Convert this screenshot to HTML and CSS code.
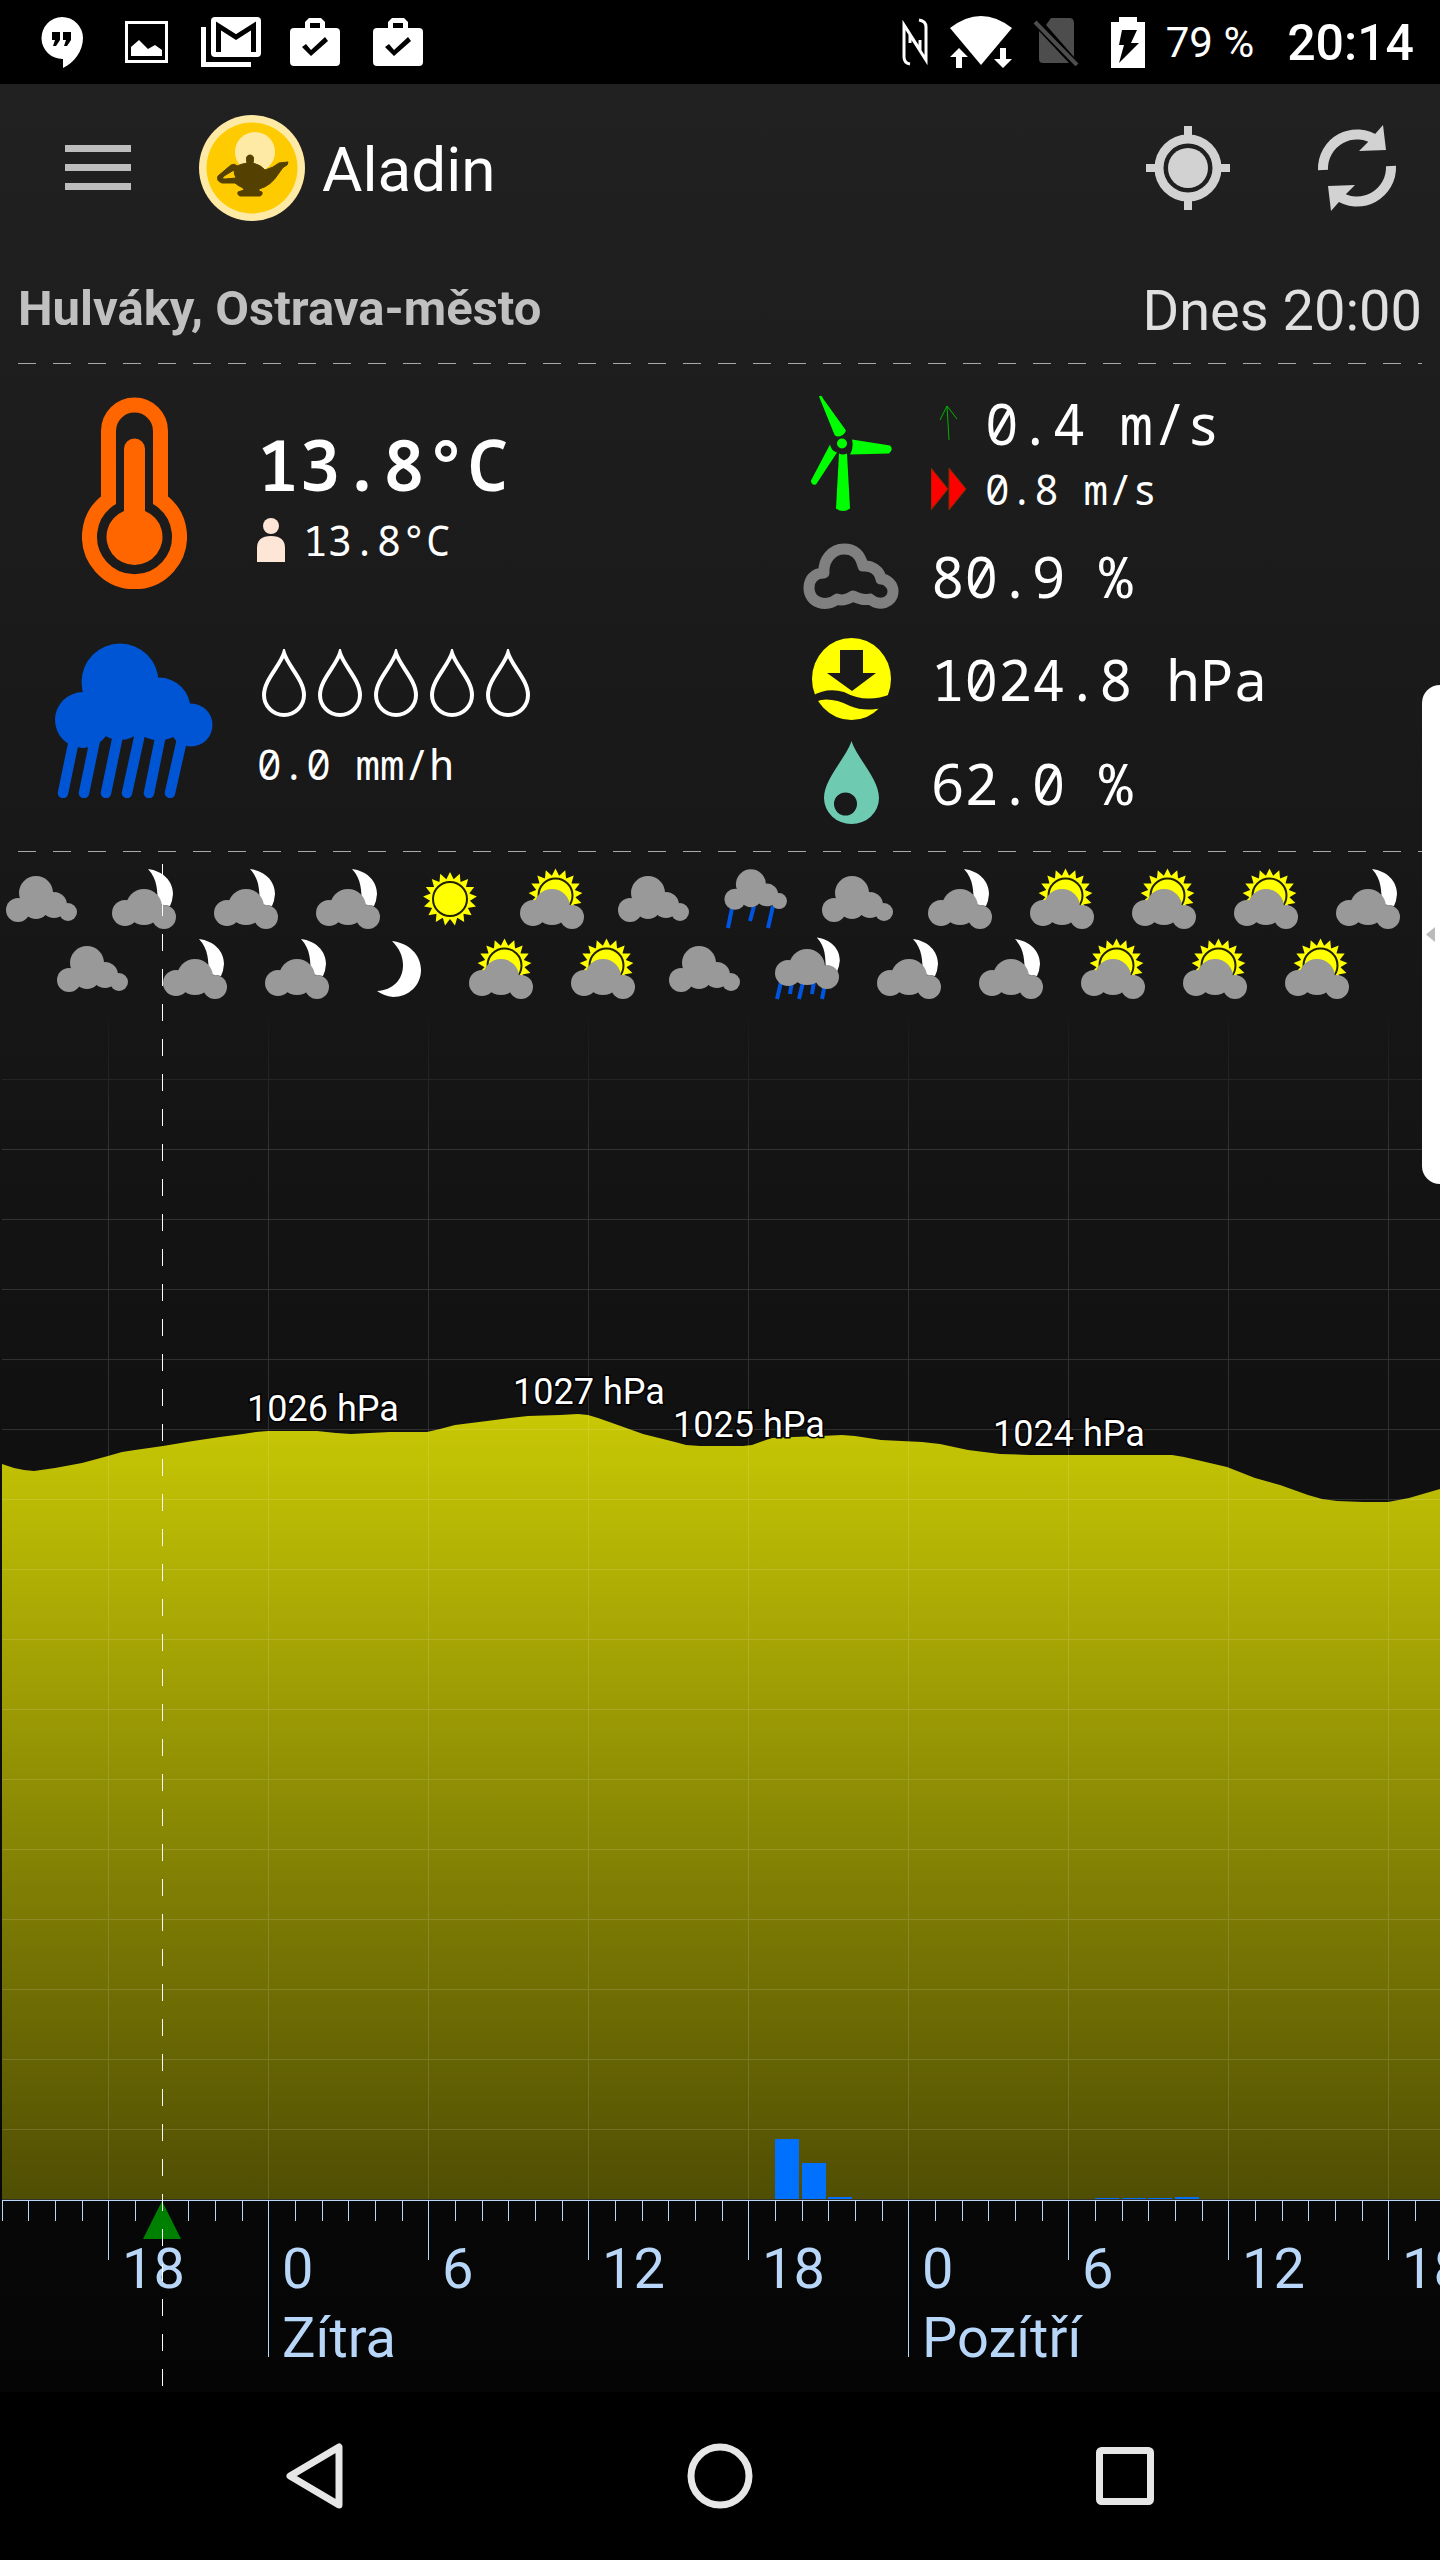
FILE: index.html
```html
<!DOCTYPE html>
<html lang="cs">
<head>
<meta charset="utf-8">
<meta name="viewport" content="width=device-width, initial-scale=1">
<title>Aladin</title>
<link rel="stylesheet" href="styles.css">
</head>
<body>
<svg class="sprite" aria-hidden="true">
  <defs>
    <symbol id="bag" viewBox="0 0 50 48"><path fill="#fff" fill-rule="evenodd" d="M15 10V4l4-4h12l4 4v6h11q4 0 4 4v30q0 4-4 4H4q-4 0-4-4V14q0-4 4-4zM20 10h10V5H20zM12 29l9 9 17-15-3-4-14 13-5-6z"/></symbol>
    <symbol id="drop" viewBox="0 0 44 68"><path fill="none" stroke="#fff" stroke-width="4" d="M22 4C18 17 2 31 2 46a20 20 0 0 0 40 0C42 31 26 17 22 4z"/></symbol>
    <g id="shape-cloud" fill="#999">
      <circle cx="30" cy="29" r="17"/><circle cx="12" cy="46" r="12"/><circle cx="48" cy="41" r="13"/><circle cx="62" cy="48" r="9"/><circle cx="30" cy="42" r="13"/>
    </g>
    <g id="shape-wide" fill="#999">
      <circle cx="17" cy="49" r="13"/><circle cx="36" cy="43" r="18"/><circle cx="56" cy="53" r="12"/>
    </g>
    <path id="shape-crescent" fill="#fff" d="M40 5C55 7 65 17 65 30Q64.500 37 62 42L50 40C49 26 50 16 40 5z"/>
    <path id="ray" d="M31.500 17L36 8l4.500 9z"/>
    <g id="shape-sun" fill="#ff0">
      <use href="#ray"/><use href="#ray" transform="rotate(21.180 36 35)"/><use href="#ray" transform="rotate(42.350 36 35)"/><use href="#ray" transform="rotate(63.530 36 35)"/><use href="#ray" transform="rotate(84.710 36 35)"/><use href="#ray" transform="rotate(105.880 36 35)"/><use href="#ray" transform="rotate(127.060 36 35)"/><use href="#ray" transform="rotate(148.240 36 35)"/><use href="#ray" transform="rotate(169.410 36 35)"/><use href="#ray" transform="rotate(190.590 36 35)"/><use href="#ray" transform="rotate(211.760 36 35)"/><use href="#ray" transform="rotate(232.940 36 35)"/><use href="#ray" transform="rotate(254.120 36 35)"/><use href="#ray" transform="rotate(275.290 36 35)"/><use href="#ray" transform="rotate(296.470 36 35)"/><use href="#ray" transform="rotate(317.650 36 35)"/><use href="#ray" transform="rotate(338.820 36 35)"/>
      <circle cx="36" cy="35" r="20"/><circle cx="36" cy="35" r="17" fill="none" stroke="#222200" stroke-width="2"/>
    </g>
    <symbol id="w-cloud" viewBox="0 0 72 70"><use href="#shape-cloud"/></symbol>
    <symbol id="w-cloud-moon" viewBox="0 0 72 70"><use href="#shape-crescent"/><use href="#shape-wide"/></symbol>
    <symbol id="w-sun" viewBox="0 0 72 70"><use href="#shape-sun"/></symbol>
    <symbol id="w-cloud-sun" viewBox="0 0 72 70"><use href="#shape-sun" transform="translate(3.500 -3.500)"/><use href="#shape-wide"/></symbol>
    <symbol id="w-moon" viewBox="0 0 72 70"><path fill="#fff" d="M29 7C46 9 58 21 58 36 58 51 46 63 30 63Q21 62 14 57C30 56 40 46 40 31 40 22 36 14 29 7z"/></symbol>
    <symbol id="w-rain" viewBox="0 0 72 70"><path stroke="#0055e0" stroke-width="4" d="M12 44L8 64M34 42l-4 15M53 42l-5 22"/><use href="#shape-cloud" transform="translate(4.500 -5.200) scale(.88)"/></symbol>
    <symbol id="w-rain-moon" viewBox="0 0 72 70"><use href="#shape-crescent" transform="translate(9 -1) scale(.92)"/><path stroke="#0055e0" stroke-width="4" d="M10 48L6 65M21 47l-2 13M32 48l-4 17M43 47l-2 13M54 50l-3 15"/><use href="#shape-wide" transform="translate(0 -10)"/></symbol>
  </defs>
</svg>

<header class="status">
  <div class="status-side">
    <svg class="st-chat" viewBox="0 0 43 51"><path fill="#fff" d="M22 0a21 21 0 0 1 21 21c0 13-9 25-20 30v-9A21 21 0 1 1 22 0z"/><path d="M12 15h8v8l-4 6h-3l2-6h-3zM23 15h8v8l-4 6h-3l2-6h-3z"/></svg>
    <svg class="st-image" viewBox="0 0 43 42"><path fill="none" stroke="#fff" stroke-width="3" d="M1.500 1.500h40v39h-40z"/><path fill="#fff" d="M6 26l8-7 9 9 7-4 7 5v6H6z"/></svg>
    <svg class="st-mail" viewBox="0 0 60 50"><path fill="none" stroke="#fff" stroke-width="5" d="M2.500 10v37.500H50"/><rect x="10" width="50" height="40" rx="4" fill="#fff"/><path fill="none" stroke="#000" stroke-width="5" d="M17.500 35V9L35 20 52.500 9v26"/></svg>
    <svg class="st-bag"><use href="#bag"/></svg>
    <svg class="st-bag"><use href="#bag"/></svg>
  </div>
  <div class="status-side status-right">
    <svg class="st-nfc" viewBox="0 0 28 48"><path fill="none" stroke="#fff" stroke-width="3" d="M9 46Q3 45 3 39V7l16 25V22M18 2q7 1 7 7v33L9 17v8"/></svg>
    <svg class="st-wifi" viewBox="0 0 62 52"><path fill="#fff" d="M0 12Q31-12 62 12L31 49z"/><path stroke="#000" stroke-width="4" fill="#fff" paint-order="stroke" d="M9 32l9 9h-6v11H6V41H0zM53 52l-9-9h6V32h6v11h6z"/></svg>
    <svg class="st-sim" viewBox="0 0 46 48"><path fill="#4d4d4d" d="M18 0h18q5 0 5 5v34L13 7zM6 13l30 32H10q-4 0-4-4z"/><path stroke="#4d4d4d" stroke-width="4" d="M2 4l42 43"/></svg>
    <svg class="st-battery" viewBox="0 0 34 51"><path fill="#fff" d="M8 0h18v5h8v46H0V5h8z"/><path d="M11 13h15l-6 13h8L8 46l5-18H8z"/></svg>
    <span class="percent">79 %</span>
    <time class="clock">20:14</time>
  </div>
</header>

<main class="app">
  <div class="appbar">
    <button class="plain" aria-label="Menu"><svg class="ic-menu" viewBox="0 0 66 46"><path fill="#bdbdbd" d="M0 0h66v7H0zM0 19h66v7H0zM0 38h66v7H0z"/></svg></button>
    <svg class="ic-logo" viewBox="0 0 106 106"><circle cx="53" cy="53" r="53" fill="#feeaa5"/><circle cx="53" cy="53" r="45.500" fill="#fecb00"/><circle cx="56" cy="37" r="20" fill="#feeaa5"/><path fill="#544000" fill-rule="evenodd" stroke="#544000" stroke-linejoin="round" d="M48 48Q46 40 51 40 56 40 54 48 62 50 66 55 74 53 80 48L89 47 88 50Q84 51 80 58 72 71 60 74V76L63 77Q64 80 61 81H41Q38 80 39 77L45 75 44 73Q38 70 36 68H23Q17 66 19 61L32 50Q36 48 38 51 42 49 48 48zM35 55L25 61Q22 64 26 64L37 63Q35 59 35 55z"/></svg>
    <h1>Aladin</h1>
    <button class="plain" aria-label="Poloha"><svg class="ic-target" viewBox="0 0 84 84"><g fill="none" stroke="#d2d2d2"><circle cx="42" cy="42" r="29" stroke-width="9"/><path stroke-width="8" d="M42 0v10M42 74v10M0 42h10M74 42h10"/></g><circle cx="42" cy="42" r="20" fill="#d2d2d2"/></svg></button>
    <button class="plain" aria-label="Obnovit"><svg class="ic-refresh" viewBox="0 0 80 86"><g id="half"><path fill="none" stroke="#d2d2d2" stroke-width="10" d="M6 45A34 34 0 0 1 60 16"/><path fill="#d2d2d2" d="M66 0l3 25-27 1 10-10z"/></g><use href="#half" transform="rotate(180 40 43)"/></svg></button>
  </div>

  <div class="place">
    <h2>Hulváky, Ostrava-město</h2>
    <time>Dnes 20:00</time>
  </div>
  <div class="dashes"></div>

  <section class="conditions">
    <div class="col-left">
      <div class="metric">
        <div class="big-icon"><svg class="ic-thermo" viewBox="0 0 105 192"><path fill="none" stroke="#f60" stroke-width="15" d="M26.500 103V34a26 26 0 0 1 52 0V103a45 45 0 1 1-52 0z"/><path fill="#f60" d="M42 114V52a10.500 10.500 0 0 1 21 0v62a28 28 0 1 1-21 0z"/></svg></div>
        <div class="values temp-values">
          <strong class="huge">13.8°C</strong>
          <span class="small feels"><svg class="ic-person" viewBox="0 0 28 44"><circle cx="14" cy="8" r="8" fill="#fee6d6"/><path fill="#fee6d6" d="M0 44V30q0-12 14-12t14 12v14z"/></svg>13.8°C</span>
        </div>
      </div>
      <div class="metric">
        <div class="big-icon"><svg class="ic-rain" viewBox="0 0 158 155"><g fill="#0055d4"><circle cx="65" cy="39" r="38.500"/><circle cx="104" cy="66" r="31.500"/><circle cx="28" cy="77" r="28"/><circle cx="136" cy="82" r="21.500"/><circle cx="65" cy="68" r="29"/></g><path stroke="#0055d4" stroke-width="10.500" stroke-linecap="round" d="M20 92L8 150M41 92L29 150M63 92L51 150M86 86L72 150M107 86L94 150M128 92L115 150"/></svg></div>
        <div class="values rain-values">
          <div class="drops"><svg><use href="#drop"/></svg><svg><use href="#drop"/></svg><svg><use href="#drop"/></svg><svg><use href="#drop"/></svg><svg><use href="#drop"/></svg></div>
          <span class="small">0.0 mm/h</span>
        </div>
      </div>
    </div>

    <div class="col-right">
      <div class="line wind">
        <div class="icon"><svg class="ic-wind" viewBox="0 0 82 116"><g fill="#0f0"><path d="M9 1q3-2 4 2l23 32q-2 6-9 6-3-1-3-3zM42 44l38 6q4 4-1 8l-39 1q4-7 2-15zM20 49q1 6 7 8L6 89q-5 1-5-4zM29 58q4 2 8 0l3 55q-7 5-14 0z"/><circle cx="32" cy="48" r="5"/></g></svg></div>
        <div class="wind-values">
          <span class="medium"><svg class="ic-slot" viewBox="0 0 36 44"><path fill="none" stroke="#00b400" d="M18 39L16 5M9 19l7-14 10 13"/></svg>0.4 m/s</span>
          <span class="small"><svg class="ic-slot" viewBox="0 0 36 44"><path fill="#f00" stroke="#7a3000" d="M0 1l17 21L0 43zM18 1l17 21-17 21z"/></svg>0.8 m/s</span>
        </div>
      </div>
      <div class="line">
        <div class="icon"><svg class="ic-cover" viewBox="0 0 96 66"><path fill="none" stroke="#808080" stroke-width="11" stroke-linejoin="round" d="M21 30C10 30 6 38 6 45 6 60 24 65 34 56Q40 59 50 53 60 58 67 56C76 64 90 60 90 48 90 42 84 36 78 36 77 28 69 22 60 23 57 10 50 6 41 6 29 6 20 17 21 30z"/></svg></div>
        <span class="medium">80.9 %</span>
      </div>
      <div class="line">
        <div class="icon"><svg class="ic-pressure" viewBox="0 0 79 82"><ellipse cx="39.500" cy="41" rx="39.500" ry="41" fill="#ff0"/><path fill="#1a1a1a" d="M28 12h23v23h13L40 53 15 35h13zM0 58Q15 49 32 54 54 66 79 56V70L64 71Q50 73 38 68 22 60 9 62L0 65z"/></svg></div>
        <span class="medium">1024.8 hPa</span>
      </div>
      <div class="line humid">
        <div class="icon"><svg class="ic-humid" viewBox="0 0 55 83"><path fill="#6ecbb2" fill-rule="evenodd" d="M27.500 0C33 17 55 38 55 57a27.500 26 0 0 1-55 0C0 38 22 17 27.500 0zM10 63a11.500 11.500 0 1 0 23 0 11.500 11.500 0 1 0-23 0z"/></svg></div>
        <span class="medium">62.0 %</span>
      </div>
    </div>
  </section>
  <div class="dashes"></div>

  <section class="forecast">
    <div class="icons">
      <svg><use href="#w-cloud"/></svg><svg><use href="#w-cloud-moon"/></svg><svg><use href="#w-cloud-moon"/></svg><svg><use href="#w-cloud-moon"/></svg><svg><use href="#w-sun"/></svg><svg><use href="#w-cloud-sun"/></svg><svg><use href="#w-cloud"/></svg><svg><use href="#w-rain"/></svg><svg><use href="#w-cloud"/></svg><svg><use href="#w-cloud-moon"/></svg><svg><use href="#w-cloud-sun"/></svg><svg><use href="#w-cloud-sun"/></svg><svg><use href="#w-cloud-sun"/></svg><svg><use href="#w-cloud-moon"/></svg>
    </div>
    <div class="icons shifted">
      <svg><use href="#w-cloud"/></svg><svg><use href="#w-cloud-moon"/></svg><svg><use href="#w-cloud-moon"/></svg><svg><use href="#w-moon"/></svg><svg><use href="#w-cloud-sun"/></svg><svg><use href="#w-cloud-sun"/></svg><svg><use href="#w-cloud"/></svg><svg><use href="#w-rain-moon"/></svg><svg><use href="#w-cloud-moon"/></svg><svg><use href="#w-cloud-moon"/></svg><svg><use href="#w-cloud-sun"/></svg><svg><use href="#w-cloud-sun"/></svg><svg><use href="#w-cloud-sun"/></svg>
    </div>

    <svg class="chart" viewBox="0 1004 1440 1388" role="img" aria-label="Tlak a srážky">
      <defs>
        <linearGradient id="pressure" gradientUnits="userSpaceOnUse" x1="0" y1="1414" x2="0" y2="2199"><stop offset="0" stop-color="#c8c805"/><stop offset="1" stop-color="#504e03"/></linearGradient>
        <linearGradient id="fade" gradientUnits="userSpaceOnUse" x1="0" y1="1004" x2="0" y2="1150"><stop offset="0" stop-color="#000"/><stop offset="1" stop-color="#fff"/></linearGradient>
        <mask id="fade-mask" maskUnits="userSpaceOnUse" x="0" y="1004" width="1440" height="1200"><rect y="1004" width="1440" height="1200" fill="url(#fade)"/></mask>
        <pattern id="vgrid" patternUnits="userSpaceOnUse" x="108" y="0" width="160" height="70"><rect width="1" height="70" fill="#fff"/></pattern>
        <pattern id="hgrid" patternUnits="userSpaceOnUse" x="0" y="1079" width="160" height="70"><rect width="160" height="1" fill="#fff"/></pattern>
        <pattern id="hours" patternUnits="userSpaceOnUse" x="108" y="2200" width="160" height="60"><path fill="#b8d6f8" d="M0 0h1v60H0zM27 0h1v21h-1zM54 0h1v21h-1zM80 0h1v21h-1zM107 0h1v21h-1zM134 0h1v21h-1z"/></pattern>
      </defs>
      <path fill="url(#pressure)" d="M2 2199V1464L14 1468 24 1470 34 1471 55 1468 82 1463 108 1456 122 1452 135 1450 163 1446 193 1441 220 1437 243 1434 256 1432 268 1431H317L336 1433 351 1434 370 1433 390 1432H427L440 1429 455 1425 487 1421 510 1418 528 1416 560 1415 578 1414 588 1415 598 1418 615 1424 643 1434 675 1442 686 1445 700 1446H743L752 1445 763 1441 772 1438 793 1437 821 1436 842 1435 855 1436 868 1438 881 1440 922 1442 940 1444 968 1450 1000 1454 1030 1455H1172L1184 1457 1197 1460 1227 1467 1255 1478 1280 1485 1308 1495 1322 1499 1337 1501 1363 1502 1388 1502 1409 1498 1440 1489V2199z"/>
      <g opacity=".13" mask="url(#fade-mask)"><rect x="2" y="1004" width="1438" height="1195" fill="url(#vgrid)"/><rect x="2" y="1064" width="1438" height="1100" fill="url(#hgrid)"/></g>
      <path fill="#0070ff" d="M775 2139h24v60h-24zM802 2163h24v36h-24zM828 2197h24v2h-24zM1095 2198h24v1h-24zM1122 2198h24v1h-24zM1148 2198h24v1h-24zM1175 2197h24v2h-24z"/>
      <rect x="2" y="2199" width="1438" height="1" fill="#33332c"/>
      <rect x="2" y="2200" width="1438" height="1" fill="#b8d6f8"/>
      <rect x="2" y="2200" width="1438" height="60" fill="url(#hours)"/>
      <path fill="#b8d6f8" d="M2 2200h1v21H2zM268 2200h1v157h-1zM908 2200h1v157h-1z"/>
      <path fill="#008000" d="M162 2201l19 38h-38z"/>
      <g class="peak"><text x="323" y="1421">1026 hPa</text><text x="589" y="1404">1027 hPa</text><text x="749" y="1437">1025 hPa</text><text x="1069" y="1446">1024 hPa</text></g>
      <g class="axis"><text x="122" y="2288">18</text><text x="282" y="2288">0</text><text x="442" y="2288">6</text><text x="602" y="2288">12</text><text x="762" y="2288">18</text><text x="922" y="2288">0</text><text x="1082" y="2288">6</text><text x="1242" y="2288">12</text><text x="1402" y="2288">18</text><text x="282" y="2357">Zítra</text><text x="922" y="2357">Pozítří</text></g>
    </svg>
    <div class="now-line"></div>
  </section>

  <button class="drawer-tab" aria-label="Otevřít panel"><svg viewBox="0 0 9 15"><path fill="#bbb" d="M9 0v15L0 7.500z"/></svg></button>
</main>

<nav class="navbar">
  <button class="plain" aria-label="Zpět"><svg viewBox="0 0 66 66"><path fill="none" stroke="#e6e6e6" stroke-width="7" stroke-linejoin="round" d="M57 4v58L8 33z"/></svg></button>
  <button class="plain" aria-label="Domů"><svg viewBox="0 0 66 66"><circle cx="33" cy="33" r="29" fill="none" stroke="#e6e6e6" stroke-width="7"/></svg></button>
  <button class="plain" aria-label="Přehled"><svg viewBox="0 0 66 66"><rect x="7.500" y="7.500" width="51" height="51" rx="2" fill="none" stroke="#e6e6e6" stroke-width="7"/></svg></button>
</nav>
</body>
</html>
```
FILE: styles.css
```css
* { box-sizing: border-box; }

body {
  margin: 0;
  min-height: 100vh;
  display: flex;
  flex-direction: column;
  background: #000;
  color: #fff;
  font-family: Roboto, sans-serif;
  overflow-x: hidden;
}

svg { display: block; flex: none; }
.sprite { position: absolute; width: 0; height: 0; }
h1, h2 { margin: 0; }

.plain {
  border: 0;
  padding: 0;
  background: none;
  cursor: pointer;
}

/* system status bar */
.status {
  display: flex;
  justify-content: space-between;
  height: 84px;
  padding: 0 26px 0 40px;
}
.status-side { display: flex; align-items: center; gap: 33px; }
.st-chat { width: 43px; height: 51px; margin-right: 9px; }
.st-image { width: 43px; height: 42px; }
.st-mail { width: 60px; height: 50px; margin-right: -4px; }
.st-bag { width: 50px; height: 48px; }
.status-right { gap: 21px; }
.st-nfc { width: 28px; height: 48px; }
.st-wifi { width: 62px; height: 52px; }
.st-sim { width: 46px; height: 48px; }
.st-battery { width: 34px; height: 51px; margin-left: 11px; }
.percent { font-size: 42px; line-height: 50px; padding-top: 2px; }
.clock { font-size: 50px; line-height: 60px; font-weight: 500; margin-left: 12px; padding-top: 2px; }

/* application */
.app {
  flex: 1;
  position: relative;
  background: linear-gradient(#212121, #050505);
}
.appbar {
  display: flex;
  align-items: center;
  height: 168px;
  padding: 0 43px 0 65px;
}
.ic-menu { width: 66px; height: 46px; }
.ic-logo { width: 106px; height: 106px; margin: 0 17px 0 68px; }
.appbar h1 { flex: 1; font-size: 62px; line-height: 72px; font-weight: 400; padding-top: 4px; }
.ic-target { width: 84px; height: 84px; margin-right: 87px; }
.ic-refresh { width: 80px; height: 86px; }

.place {
  display: flex;
  justify-content: space-between;
  align-items: flex-start;
  padding: 27px 18px 20px;
}
.place h2 { font-size: 49px; line-height: 60px; font-weight: 700; color: #c0c0c0; }
.place time { font-size: 56px; line-height: 64px; color: #e0e0e0; }

.dashes {
  height: 1px;
  margin: 0 18px;
  background: repeating-linear-gradient(90deg, #a8a8a8 0 18px, transparent 18px 35px);
}

/* current conditions */
.conditions {
  display: grid;
  grid-template-columns: 1fr 1fr;
  font-family: "Droid Sans Mono", "Noto Sans Mono", "DejaVu Sans Mono", monospace;
  padding-bottom: 27px;
}
.col-left {
  display: flex;
  flex-direction: column;
  gap: 54px;
  padding: 33px 0 0 55px;
}
.metric { display: flex; gap: 44px; }
.big-icon { width: 158px; display: flex; justify-content: center; }
.ic-thermo { width: 105px; height: 192px; }
.ic-rain { width: 158px; height: 155px; }
.values { display: flex; flex-direction: column; }
.temp-values { gap: 14px; padding-top: 27px; }
.rain-values { gap: 25px; padding-top: 6px; }
.huge { font-size: 70px; line-height: 80px; font-weight: 600; }
.medium { font-size: 56px; line-height: 60px; white-space: pre; }
.small { font-size: 41px; line-height: 44px; white-space: pre; }
.feels { display: flex; gap: 18px; }
.ic-person { width: 28px; height: 44px; }
.drops { display: flex; gap: 12px; padding-left: 5px; }
.drops svg { width: 44px; height: 68px; }

.col-right {
  display: flex;
  flex-direction: column;
  gap: 29px;
  padding: 29px 0 0 83px;
}
.line { display: flex; align-items: center; gap: 32px; }
.icon { width: 96px; display: flex; justify-content: center; }
.wind { align-items: flex-start; }
.wind-values { display: flex; flex-direction: column; gap: 14px; }
.wind-values span { display: flex; align-items: center; gap: 18px; }
.ic-slot { width: 36px; height: 44px; }
.ic-wind { width: 82px; height: 121px; }
.ic-cover { width: 96px; height: 66px; }
.ic-pressure { width: 79px; height: 82px; }
.ic-humid { width: 55px; height: 83px; }
.humid { margin-top: -8px; }

/* forecast icons and chart */
.forecast { position: relative; padding-top: 12px; overflow: hidden; }
.icons { display: flex; gap: 30px; padding-left: 6px; }
.icons.shifted { padding-left: 57px; }
.icons svg { width: 72px; height: 70px; }
.chart { width: 100%; height: auto; }
.peak text {
  font-size: 36px;
  text-anchor: middle;
  fill: #fff;
  stroke: #000;
  stroke-width: 3px;
  paint-order: stroke;
}
.axis text { font-size: 56px; fill: #b8d6f8; }
.now-line {
  position: absolute;
  top: 12px;
  bottom: 6px;
  left: 11.25%;
  width: 1px;
  background: repeating-linear-gradient(#fff 0 17px, transparent 17px 35px);
}

.drawer-tab {
  position: absolute;
  top: 601px;
  right: 0;
  width: 18px;
  height: 499px;
  border: 0;
  padding: 0 0 0 4px;
  border-radius: 18px 0 0 18px;
  background: #fff;
}
.drawer-tab svg { width: 9px; height: 15px; }

/* system navigation */
.navbar {
  display: flex;
  justify-content: center;
  align-items: center;
  gap: 339px;
  height: 168px;
}
.navbar svg { width: 66px; height: 66px; }
```
